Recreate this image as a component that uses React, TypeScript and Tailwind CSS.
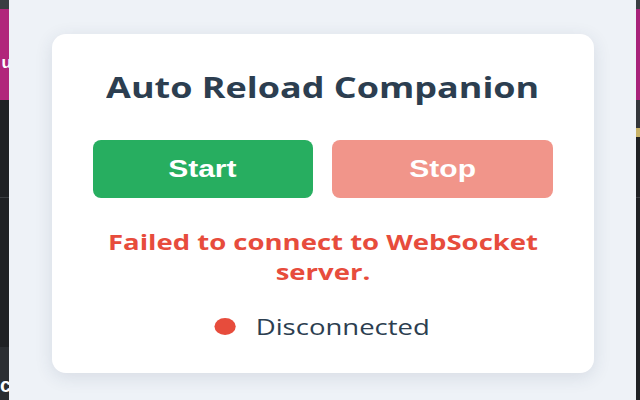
const LeftStrip = () => (
  <div className="w-[9px] h-full flex flex-col overflow-hidden shrink-0 font-['Liberation_Sans',sans-serif] font-bold text-white">
    <div className="h-[9px] bg-[#3a3e42]" />
    <div className="h-[91px] bg-[#b1267b] flex items-center justify-end text-[17px] leading-none pt-[16px]">
      <span className="-mr-[3px]">u</span>
    </div>
    <div className="h-[97px] bg-[#1f2124]" />
    <div className="h-[1px] bg-[#3b3e42]" />
    <div className="h-[149px] bg-[#1f2124]" />
    <div className="flex-1 bg-[#2b2e32] flex items-end justify-end text-[20px] leading-none pb-[5px]">
      <span className="-mr-[2px]">c</span>
    </div>
  </div>
);

const RightStrip = () => (
  <div className="w-[4px] h-full flex flex-col overflow-hidden shrink-0">
    <div className="h-[9px] bg-[#3a3e42]" />
    <div className="h-[91px] bg-[#a8237a]" />
    <div className="h-[28px] bg-[#33363a]" />
    <div className="h-[9px] bg-[#c9b46a]" />
    <div className="h-[60px] bg-[#1f2124]" />
    <div className="h-[1px] bg-[#3b3e42]" />
    <div className="flex-1 bg-[#1f2124]" />
  </div>
);

export default function App() {
  return (
    <div className="w-[640px] h-[400px] flex overflow-hidden">
      <LeftStrip />

      {/* Popup (the capture is stretched sideways, hence scale-x on the texts) */}
      <main className="flex-1 bg-[#eef2f7] flex justify-center pt-[34px]">
        <div className="w-[542px] h-[339px] bg-white rounded-[14px] shadow-[0_4px_18px_rgba(40,60,90,0.12)] px-[41px] pt-[30px] flex flex-col items-center font-['Open_Sans',sans-serif]">
          <h1 className="text-[29px] leading-[46px] font-bold text-[#2c3e50] scale-x-[1.24] whitespace-nowrap">
            Auto Reload Companion
          </h1>

          <div className="mt-[30px] w-full flex gap-[19px]">
            <button className="flex-1 h-[58px] rounded-[8px] bg-[#27ae60] text-white text-[24px] font-bold font-['Liberation_Sans',sans-serif]">
              <span className="inline-block scale-x-125">Start</span>
            </button>
            <button className="flex-1 h-[58px] rounded-[8px] bg-[#f1958a] text-white text-[24px] font-bold font-['Liberation_Sans',sans-serif]">
              <span className="inline-block scale-x-125">Stop</span>
            </button>
          </div>

          <p className="mt-[28px] w-[368px] text-[22px] leading-[30px] font-bold text-[#e74c3c] text-center scale-x-125">
            Failed to connect to WebSocket server.
          </p>

          <div className="mt-[25px] flex items-center gap-[16px] scale-x-125">
            <span className="w-[17px] h-[17px] rounded-full bg-[#e74c3c]" />
            <span className="text-[22px] leading-[30px] text-[#2c3e50]">Disconnected</span>
          </div>
        </div>
      </main>

      <RightStrip />
    </div>
  );
}
